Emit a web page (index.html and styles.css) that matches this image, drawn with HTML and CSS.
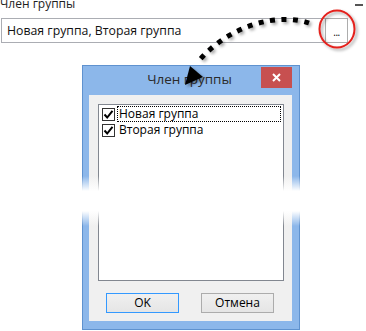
FILE: index.html
```html
<!DOCTYPE html>
<html>
<head>
<meta charset="utf-8">
<link rel="stylesheet" href="styles.css">
</head>
<body>
<div class="page">
  <div class="prop-head">
    <span class="prop-label">Член группы</span>
    <span class="collapse"></span>
  </div>
  <div class="field-row">
    <div class="field">Новая группа, Вторая группа</div>
    <div class="browse">...</div>
  </div>
  <div class="dialog">
    <div class="titlebar">
      <span class="title">Член группы</span>
      <span class="close">
        <svg width="9" height="9" viewBox="0 0 9 9"><path d="M1 1L8 8M8 1L1 8" stroke="#fff" stroke-width="2" fill="none"/></svg>
      </span>
    </div>
    <div class="client">
      <div class="list">
        <div class="item">
          <span class="cb"><svg width="11" height="11" viewBox="0 0 11 11"><path d="M1.5 5.5L4.2 8.5L9.5 1.8" stroke="#000" stroke-width="2" fill="none"/></svg></span>
          <span class="txt focused">Новая группа</span>
        </div>
        <div class="item">
          <span class="cb"><svg width="11" height="11" viewBox="0 0 11 11"><path d="M1.5 5.5L4.2 8.5L9.5 1.8" stroke="#000" stroke-width="2" fill="none"/></svg></span>
          <span class="txt">Вторая группа</span>
        </div>
      </div>
      <div class="buttons">
        <div class="btn default">OK</div>
        <div class="btn">Отмена</div>
      </div>
    </div>
  </div>
  <div class="fade"></div>
  <svg class="annot" width="366" height="331" viewBox="0 0 366 331">
    <defs>
      <filter id="sh" x="-20%" y="-20%" width="140%" height="140%">
        <feDropShadow dx="2" dy="2" stdDeviation="1.5" flood-color="#000" flood-opacity="0.35"/>
      </filter>
    </defs>
    <ellipse cx="337" cy="31" rx="17.5" ry="18.5" fill="none" stroke="#e4201c" stroke-width="2" filter="url(#sh)"/>
    <g filter="url(#sh)">
      <path d="M309 25C280 15 230 25 197 65" fill="none" stroke="#000" stroke-width="5" stroke-dasharray="5 6.5"/>
      <polygon points="185,87 203,79 190,68" fill="#000"/>
    </g>
  </svg>
</div>
</body>
</html>
```

FILE: styles.css
```css
html, body {
  margin: 0;
  padding: 0;
}
body {
  width: 366px;
  height: 331px;
  overflow: hidden;
  background: #fff;
  font-family: "Open Sans", "Noto Sans", sans-serif;
  color: #000;
}
.page {
  position: relative;
  width: 366px;
  height: 331px;
}
.prop-head {
  display: flex;
  justify-content: space-between;
  margin-top: -2px;
  height: 12px;
}
.prop-label {
  font-size: 12px;
  line-height: 12px;
  color: #1e1e1e;
}
.collapse {
  width: 8px;
  height: 2px;
  background: #555;
  margin-top: 6px;
  margin-right: 3px;
}
.field-row {
  display: flex;
  margin: 8px 0 0 1px;
  height: 25px;
}
.field {
  width: 324px;
  box-sizing: border-box;
  border: 1px solid #abadb3;
  border-right: none;
  font-size: 12.3px;
  line-height: 24px;
  padding-left: 5px;
  color: #111;
}
.browse {
  width: 23px;
  box-sizing: border-box;
  border: 1px solid #adadad;
  display: flex;
  justify-content: center;
  align-items: flex-end;
  font-size: 10px;
  line-height: 10px;
  padding-bottom: 5px;
  letter-spacing: -0.5px;
  color: #000;
}
.dialog {
  margin: 22px 0 0 82px;
  width: 218px;
  height: 265px;
  box-sizing: border-box;
  border: 1px solid #5f92cf;
  background: #8cb7ea;
  padding: 0 7px 8px 6px;
  display: flex;
  flex-direction: column;
}
.titlebar {
  height: 30px;
  display: grid;
}
.title {
  grid-area: 1 / 1;
  justify-self: center;
  align-self: center;
  font-size: 13.5px;
  color: #2b2b2b;
  margin-left: -2px;
  margin-top: -4px;
}
.close {
  grid-area: 1 / 1;
  justify-self: end;
  align-self: start;
  width: 31px;
  height: 21px;
  margin-top: 1px;
  background: #c75050;
  display: flex;
  align-items: center;
  justify-content: center;
}
.client {
  flex: 1;
  background: #f0f0f0;
  padding: 9px 8px 8px 9px;
  display: flex;
  flex-direction: column;
}
.list {
  height: 177px;
  box-sizing: border-box;
  border: 1px solid #828790;
  background: #fff;
  padding-top: 1px;
}
.item {
  display: flex;
  align-items: center;
  height: 16px;
  padding-left: 3px;
  padding-right: 2px;
}
.cb {
  width: 13px;
  height: 13px;
  box-sizing: border-box;
  border: 1px solid #333;
  background: #fff;
  margin-right: 2px;
  display: flex;
  align-items: center;
  justify-content: center;
}
.txt {
  flex: 1;
  font-size: 12px;
  line-height: 14px;
  padding-left: 1px;
  border: 1px dotted transparent;
  color: #000;
}
.txt.focused {
  border-color: #000;
}
.buttons {
  margin-top: 12px;
  display: flex;
  justify-content: space-between;
  padding: 0 10px 0 8px;
}
.btn {
  width: 73px;
  height: 20px;
  box-sizing: border-box;
  border: 1px solid #acacac;
  background: linear-gradient(#f0f0f0, #e5e5e5);
  font-size: 12px;
  line-height: 18px;
  text-align: center;
  color: #000;
}
.btn.default {
  border-color: #3399ff;
}
.fade {
  position: absolute;
  left: 0;
  top: 178px;
  width: 366px;
  height: 50px;
  background: linear-gradient(to bottom, rgba(255,255,255,0), #fff 30%, #fff 70%, rgba(255,255,255,0));
}
.annot {
  position: absolute;
  left: 0;
  top: 0;
  pointer-events: none;
}
```
